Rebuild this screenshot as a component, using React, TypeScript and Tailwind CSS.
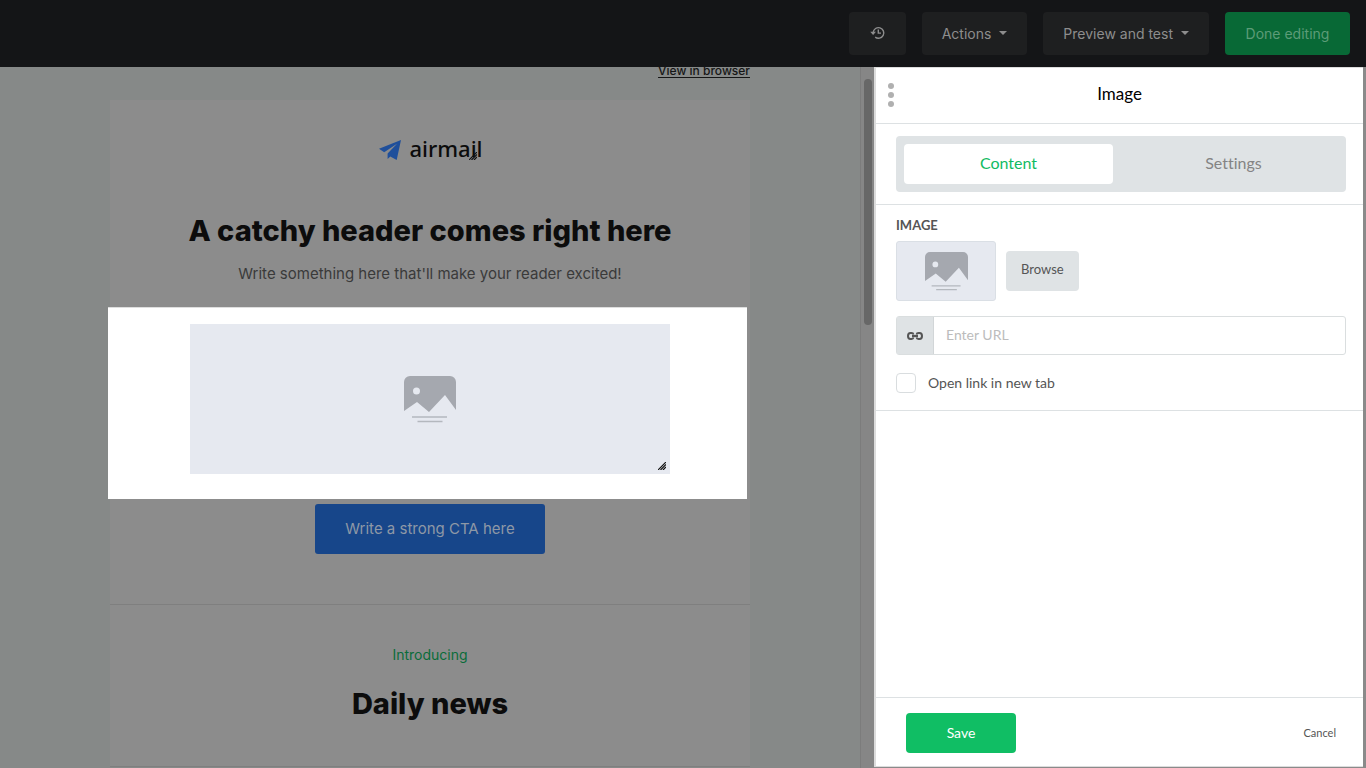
import { useState, type ReactNode } from 'react'

function Caret() {
  return <span className="mb-0.5 h-0 w-0 border-x-4 border-t-4 border-x-transparent border-t-current" />
}

function HistoryIcon() {
  return (
    <svg className="mb-0.5" width="17" height="14" viewBox="-1 0 17 14" fill="none" stroke="currentColor" strokeWidth="1.4">
      <path d="M3.2 7V6.4a5.3 5.3 0 1 1 2 4.7" />
      <path d="M.2 5.8h5.8L3.1 8.9z" fill="currentColor" stroke="none" />
      <path d="M8.3 3.6v3.5h2.7" />
    </svg>
  )
}

function LinkIcon() {
  return (
    <svg width="16" height="8" viewBox="0 0 16 8" fill="none" stroke="currentColor" strokeWidth="2">
      <path d="M6.5 2.6C6.3 1.5 5.6 1 4.5 1h-1C1.9 1 1 2 1 4s.9 3 2.5 3h1c1.1 0 1.8-.5 2-1.6" />
      <path d="M9.5 2.6C9.7 1.5 10.4 1 11.5 1h1C14.1 1 15 2 15 4s-.9 3-2.5 3h-1c-1.1 0-1.8-.5-2-1.6" />
      <path d="M5 4h6" />
    </svg>
  )
}

/** Grey landscape with two caption lines, shown wherever no image is picked yet. */
function Placeholder({ className }: { className: string }) {
  return (
    <svg className={className} viewBox="0 0 52 47">
      <path
        fill="#a5a8af"
        fillRule="evenodd"
        d="M6 0h40a6 6 0 0 1 6 6v28L41 19 25 36 13 26 0 35V6a6 6 0 0 1 6-6zM12.5 11.5a3.5 3.5 0 1 0 0 7 3.5 3.5 0 0 0 0-7z"
      />
      <path d="M8 41h35M13.5 45.5h25" stroke="#b4b8be" strokeWidth="1.5" />
    </svg>
  )
}

function ResizeGrip({ className }: { className: string }) {
  return (
    <svg className={className} width="8" height="8" viewBox="0 0 8 8" stroke="#111" strokeWidth="1.2">
      <path d="M0 8 8 0M2.5 8 8 2.5M5 8l3-3" />
    </svg>
  )
}

function BarButton({ label, children }: { label?: string; children: ReactNode }) {
  return (
    <button
      aria-label={label}
      className="flex h-[43px] items-center gap-2 rounded bg-[#1e1f20] px-5 text-sm text-[#8d8d8d]"
    >
      {children}
    </button>
  )
}

function TopBar() {
  return (
    <header className="flex h-[67px] shrink-0 items-center justify-end gap-4 bg-[#141517] px-4">
      <BarButton label="History">
        <HistoryIcon />
      </BarButton>
      <BarButton>
        Actions <Caret />
      </BarButton>
      <BarButton>
        Preview and test <Caret />
      </BarButton>
      <button className="h-[43px] w-[125px] rounded bg-[#086936] text-sm text-[#5c9c78]">Done editing</button>
    </header>
  )
}

function EmailCanvas() {
  return (
    <section className="min-w-0 flex-1 overflow-hidden bg-[#868988]">
      <div className="mx-auto w-[640px] max-w-full">
        {/* scrolled a little, so the bar cuts the first line */}
        <p className="-mt-1.5 text-right text-xs leading-5 font-medium">
          <a href="#" className="text-[#161616] underline underline-offset-2">
            View in browser
          </a>
        </p>

        <div className="mt-[19px] bg-[#8c8c8c] text-center">
          <div className="flex items-center justify-center gap-2 pt-[34px] pl-0.5">
            <svg className="mt-1" width="22" height="20" viewBox="0 0 22 20" fill="#1f4f9b">
              <path d="M22 0 0 8.8l5.2 3.4L18 3.8 8.6 13.6V19l2.7-2.4 6.4 3.4z" />
            </svg>
            <span className="relative font-['Noto_Sans'] text-[22px] leading-7 font-medium text-[#0c0c0c]">
              airmail
              <ResizeGrip className="absolute right-1.5 bottom-0.5" />
            </span>
          </div>
          <h1 className="mt-12 text-[29px] leading-[42px] font-extrabold text-[#0c0c0c]">
            A catchy header comes right here
          </h1>
          <p className="mt-2.5 text-[15px] leading-6 text-[#3a3a3a]">
            Write something here that&apos;ll make your reader excited!
          </p>

          {/* selected block, lit up over the dimmed page */}
          <div className="relative mt-[21px] py-[17px]">
            <div className="absolute inset-y-0 right-[3px] -left-0.5 border-t border-[#dedede] bg-white" />
            <div className="relative mx-auto mb-2 flex h-[150px] w-3/4 items-center justify-center bg-[#e6e9f0]">
              <Placeholder className="h-[47px] w-[52px]" />
              <ResizeGrip className="absolute right-1 bottom-1" />
            </div>
          </div>

          <div className="border-b border-[#7f7f7f] pt-[5px] pb-[50px]">
            <button className="h-[50px] w-[230px] rounded-[3px] bg-[#17468a] text-[15px] text-[#8e98a6]">
              Write a strong CTA here
            </button>
          </div>

          <div className="border-b border-[#7f7f7f] pb-[41px]">
            <p className="pt-10 text-sm leading-5 text-[#0a6c3a]">Introducing</p>
            <h2 className="mt-[18px] text-[29px] leading-[42px] font-extrabold text-[#0c0c0c]">Daily news</h2>
          </div>
        </div>
      </div>
    </section>
  )
}

function ImagePanel() {
  const [tab, setTab] = useState('Content')
  const [url, setUrl] = useState('')

  return (
    <aside className="mr-[3px] mb-px flex w-[489px] shrink-0 flex-col border-t border-b border-l-2 border-[#dcdcdc] bg-white font-['Lato',sans-serif] text-[#555] [font-variant-ligatures:none]">
      <div className="relative flex h-14 shrink-0 items-center justify-center border-b border-[#dde1e3] pb-1">
        <button aria-label="More" className="absolute top-[15px] left-3 flex flex-col gap-[3px]">
          <i className="size-1.5 rounded-full bg-[#b0b0b0]" />
          <i className="size-1.5 rounded-full bg-[#b0b0b0]" />
          <i className="size-1.5 rounded-full bg-[#b0b0b0]" />
        </button>
        <h2 className="text-[17px] text-black">Image</h2>
      </div>

      <div className="border-b border-[#dde1e3] py-3 pr-[17px] pl-5">
        <div className="grid h-14 grid-cols-2 rounded bg-[#dfe3e5]">
          {['Content', 'Settings'].map((name) => (
            <button
              key={name}
              onClick={() => setTab(name)}
              className={`m-2 rounded pb-0.5 text-base ${
                tab === name ? 'bg-white text-[#11bb63]' : 'text-[#848484]'
              }`}
            >
              {name}
            </button>
          ))}
        </div>
      </div>

      <div className="border-b border-[#dde1e3] pt-[11px] pr-[17px] pb-[17px] pl-5">
        <h3 className="text-[13px] leading-[18px] font-bold">IMAGE</h3>
        <div className="mt-[7px] flex items-center gap-2.5">
          <div className="flex h-[60px] w-[100px] items-center justify-center rounded-[3px] border border-[#dadfe5] bg-[#e6e9f0]">
            <Placeholder className="h-[39px] w-[43px]" />
          </div>
          <button className="h-10 rounded bg-[#dfe3e5] px-[15px] pb-0.5 text-[13px]">Browse</button>
        </div>

        <div className="mt-[15px] flex h-[39px] rounded-[3px] border border-[#dadedf]">
          <label htmlFor="url" className="flex w-[37px] items-center justify-center border-r border-[#d2d6d8] bg-[#dfe3e5]">
            <LinkIcon />
          </label>
          <input
            id="url"
            aria-label="Link"
            value={url}
            onChange={(e) => setUrl(e.target.value)}
            placeholder="Enter URL"
            className="min-w-0 flex-1 px-3 pb-0.5 text-sm outline-none placeholder:text-[#bcbcbc]"
          />
        </div>

        <label className="mt-[18px] flex items-center gap-3 text-sm leading-5">
          <input type="checkbox" className="size-5 appearance-none rounded border border-[#d9dddf] checked:bg-[#11bb63]" />
          Open link in new tab
        </label>
      </div>

      <div className="mt-auto flex h-[69px] items-center justify-between border-t border-[#dde1e3] pt-0.5 pr-[27px] pl-[30px]">
        <button className="h-10 w-[110px] rounded bg-[#10be64] text-sm text-white">Save</button>
        <button className="text-[11px]">Cancel</button>
      </div>
    </aside>
  )
}

export default function App() {
  return (
    <div className="flex h-screen flex-col bg-[#8a8a8a] font-['Inter',sans-serif]">
      <TopBar />
      <main className="flex min-h-0 flex-1">
        <EmailCanvas />
        <div className="w-3.5 shrink-0 border-l border-[#7c7c7c] bg-[#868686] pt-3 pl-[3px]">
          <div className="h-[246px] w-2 rounded-full bg-[#676767]" />
        </div>
        <ImagePanel />
      </main>
    </div>
  )
}
